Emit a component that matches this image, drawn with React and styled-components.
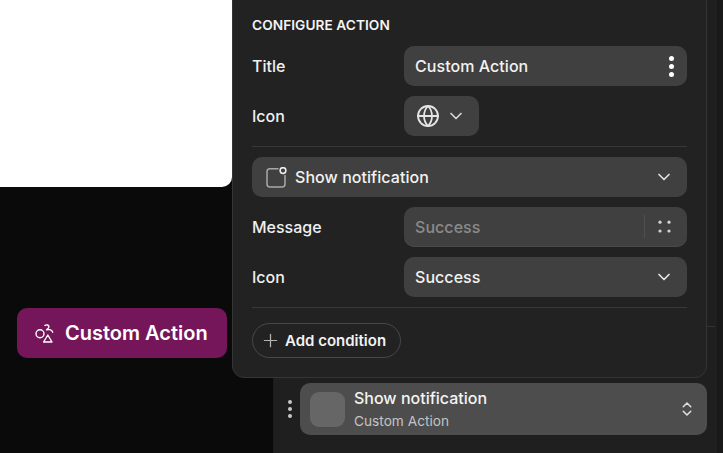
import React from 'react'
import styled, { createGlobalStyle } from 'styled-components'
import { ChevronDown, ChevronsUpDown, Globe, Plus } from 'lucide-react'

const Global = createGlobalStyle`
  html, body { margin: 0; padding: 0; background: #0a0a0a; }
  * { box-sizing: border-box; }
  body { font-family: Inter, "Liberation Sans", sans-serif; }
`

const Page = styled.div`
  position: relative;
  width: 723px;
  height: 453px;
  display: flex;
  overflow: hidden;
  background: #0a0a0a;
`

const Canvas = styled.div`
  width: 273px;
  flex: none;
  display: flex;
  flex-direction: column;
`

const Preview = styled.div`
  width: 232px;
  height: 187px;
  background: #fff;
  border-bottom-right-radius: 10px;
`

const ActionButton = styled.button`
  margin: 121px 0 0 17px;
  width: 210px;
  height: 50px;
  padding: 0 0 0 18px;
  display: flex;
  align-items: center;
  gap: 11px;
  border: 0;
  border-radius: 10px;
  background: #75165a;
  color: #fff;
  font: 600 20px Inter, sans-serif;
`

const Sidebar = styled.div`
  flex: 1;
  display: flex;
  background: #1f1f1f;
  border-left: 1px solid #1b1b1b;
`

const SidebarBody = styled.div`
  width: 443px;
  height: 100%;
  padding: 0 0 18px;
  display: flex;
  flex-direction: column;
`

const SidebarSection = styled.div`
  height: 327px;
  margin-right: 2px;
  border-bottom: 1px solid #333;
`

const StepRow = styled.div`
  margin-top: auto;
  padding-left: 14px;
  display: flex;
  align-items: center;
  gap: 8px;
`

const SidebarEdge = styled.div`
  flex: 1;
  background: #191919;
`

const Grip = styled.div`
  display: flex;
  flex-direction: column;
  align-items: center;
  gap: 3px;
  span {
    width: 4px;
    height: 4px;
    border-radius: 50%;
    background: #c8c8c8;
  }
`

const StepCard = styled.div`
  width: 407px;
  height: 52px;
  padding: 0 11px 0 10px;
  display: flex;
  align-items: center;
  gap: 9px;
  border-radius: 10px;
  background: #4d4d4d;
`

const StepIcon = styled.div`
  width: 35px;
  height: 35px;
  border-radius: 9px;
  background: #666;
`

const StepText = styled.div`
  flex: 1;
  margin-top: -1px;
  display: flex;
  flex-direction: column;
  gap: 6px;
`

const StepTitle = styled.div`
  font-size: 16px;
  line-height: 18px;
  font-weight: 450;
  color: #f4f4f4;
`

const StepSub = styled.div`
  font-size: 13.7px;
  line-height: 16px;
  color: #c4c4c4;
`

const Popover = styled.div`
  position: absolute;
  left: 232px;
  top: -10px;
  width: 475px;
  height: 388px;
  padding: 26px 19px 0;
  background: #222;
  border: 1px solid #353535;
  border-radius: 12px;
  color: #ececec;
`

const Heading = styled.div`
  height: 16px;
  margin-bottom: 13px;
  font-size: 13.7px;
  line-height: 16px;
  font-weight: 600;
  letter-spacing: 0.05px;
  color: #f4f4f4;
`

const Row = styled.div`
  display: flex;
  align-items: center;
  height: 40px;
  margin-bottom: 10px;
`

const Label = styled.div`
  width: 152px;
  font-size: 16px;
  font-weight: 450;
  color: #f0f0f0;
`

const Field = styled.div`
  flex: ${p => (p.$compact ? 'none' : 1)};
  width: ${p => (p.$compact ? '75px' : 'auto')};
  height: 40px;
  display: flex;
  align-items: center;
  padding: ${p => (p.$compact ? '0 0 0 12px' : '0 13px 0 11px')};
  gap: ${p => (p.$compact ? '6px' : '0')};
  border-radius: 10px;
  background: #404040;
  border-bottom: ${p => (p.$outlined ? '1px solid #4a4a4a' : '0')};
  color: #ececec;
`

const FieldText = styled.span`
  flex: 1;
  font-size: 16px;
  letter-spacing: 0.05px;
  font-weight: ${p => p.$weight || 450};
  color: ${p => (p.$muted ? '#8b8b8b' : '#f2f2f2')};
`

const Divider = styled.div`
  height: 1px;
  margin-bottom: 10px;
  background: #383838;
`

const SelectBar = styled(Field)`
  flex: none;
  margin-bottom: 10px;
  padding: 0 13px 0 14px;
  gap: 8px;
`

const MoreDots = styled.div`
  display: flex;
  flex-direction: column;
  gap: 3px;
  span {
    width: 5px;
    height: 5px;
    border-radius: 50%;
    background: #fff;
  }
`

const FieldSep = styled.div`
  width: 1px;
  height: 23px;
  margin-right: 13px;
  background: #4f4f4f;
`

const DotsSvg = styled.svg`
  margin-right: 3px;
`

const AddButton = styled.button`
  height: 35px;
  width: 149px;
  margin-top: 15px;
  padding: 0 0 0 7px;
  display: flex;
  align-items: center;
  gap: 4px;
  border: 1px solid #484848;
  border-radius: 18px;
  background: transparent;
  color: #f2f2f2;
  font: 600 15px Inter, sans-serif;
`

const ShapesIcon = () => (
  <svg width="19" height="19" viewBox="0 0 19 19" fill="none" stroke="#fff" strokeWidth="1.4" strokeLinecap="round" strokeLinejoin="round">
    <circle cx="5" cy="9.7" r="4" />
    <path d="M10 1.4c1.3-1 3.9-.6 3.9 1.3 0 1.4-1.3 2.2-2.4 3.2 1.9-.9 5.2-.5 6.2 2.3" />
    <path d="M12.8 11 17 18H8.6z" />
  </svg>
)

const NotifyIcon = () => (
  <svg width="21" height="21" viewBox="0 0 21 21" fill="none" stroke="#a8a8a8" strokeWidth="1.5" strokeLinecap="round">
    <path d="M12 1.8H4A3 3 0 0 0 1 4.8v12.2a3 3 0 0 0 3 3h12a3 3 0 0 0 3-3V8.4" />
    <circle cx="17" cy="3.6" r="2.9" stroke="#eee" />
  </svg>
)

const GridDots = () => (
  <DotsSvg width="13" height="13" viewBox="0 0 13 13" fill="#d4d4d4">
    <circle cx="2" cy="2.2" r="1.6" />
    <circle cx="11" cy="2.2" r="1.6" />
    <circle cx="2" cy="11" r="1.6" />
    <circle cx="11" cy="11" r="1.6" />
  </DotsSvg>
)

const App = () => (
  <Page>
    <Global />
    <Canvas>
      <Preview />
      <ActionButton>
        <ShapesIcon />
        Custom Action
      </ActionButton>
    </Canvas>
    <Sidebar>
      <SidebarBody>
        <SidebarSection />
        <StepRow>
          <Grip><span /><span /><span /></Grip>
          <StepCard>
            <StepIcon />
            <StepText>
              <StepTitle>Show notification</StepTitle>
              <StepSub>Custom Action</StepSub>
            </StepText>
            <ChevronsUpDown size={18} color="#e0e0e0" strokeWidth={2} />
          </StepCard>
        </StepRow>
      </SidebarBody>
      <SidebarEdge />
    </Sidebar>
    <Popover>
      <Heading>CONFIGURE ACTION</Heading>
      <Row>
        <Label>Title</Label>
        <Field>
          <FieldText>Custom Action</FieldText>
          <MoreDots><span /><span /><span /></MoreDots>
        </Field>
      </Row>
      <Row>
        <Label>Icon</Label>
        <Field $compact>
          <Globe size={24} color="#e6e6e6" strokeWidth={1.8} />
          <ChevronDown size={20} color="#d8d8d8" strokeWidth={2} />
        </Field>
      </Row>
      <Divider />
      <SelectBar>
        <NotifyIcon />
        <FieldText $weight={500}>Show notification</FieldText>
        <ChevronDown size={20} color="#e0e0e0" strokeWidth={2} />
      </SelectBar>
      <Row>
        <Label>Message</Label>
        <Field $outlined>
          <FieldText $muted>Success</FieldText>
          <FieldSep />
          <GridDots />
        </Field>
      </Row>
      <Row>
        <Label>Icon</Label>
        <Field>
          <FieldText>Success</FieldText>
          <ChevronDown size={20} color="#e8e8e8" strokeWidth={2} />
        </Field>
      </Row>
      <Divider />
      <AddButton>
        <Plus size={21} color="#b4b4b4" strokeWidth={1.4} />
        Add condition
      </AddButton>
    </Popover>
  </Page>
)

export default App
